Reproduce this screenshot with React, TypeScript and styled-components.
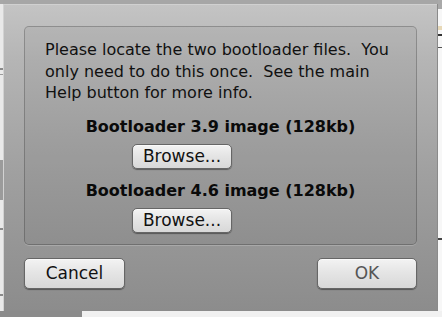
import React from 'react';
import styled, { createGlobalStyle } from 'styled-components';

const Global = createGlobalStyle`
  html, body {
    margin: 0;
    padding: 0;
    width: 442px;
    height: 317px;
    overflow: hidden;
    background: #f3f3f3;
  }
`;

const Screen = styled.div`
  display: grid;
  grid-template-columns: 3px 435px 4px;
  grid-template-rows: 311px 6px;
  width: 442px;
  height: 317px;
  font-family: 'DejaVu Sans', 'Liberation Sans', sans-serif;
`;

const LeftEdge = styled.div`
  background:
    linear-gradient(#a7a7a7 0 4px, transparent 4px),
    linear-gradient(transparent 68px, #8a8a8a 68px 70px, transparent 70px 74px, #9a9a9a 74px 75px, transparent 75px),
    linear-gradient(transparent 160px, #9b9b9b 160px 200px, transparent 200px),
    linear-gradient(transparent 228px, #8a8a8a 228px 230px, transparent 230px 294px, #8a8a8a 294px 296px, transparent 296px),
    #e9e9e9;
`;

const RightEdge = styled.div`
  background:
    linear-gradient(#a9a9a9 0 9px, transparent 9px),
    linear-gradient(transparent 26px, #e8d9b8 26px 30px, transparent 30px),
    linear-gradient(transparent 34px, #333 34px 36px, transparent 36px 47px, #555 47px 48px, transparent 48px),
    linear-gradient(transparent 238px, #444 238px 240px, transparent 240px),
    #f7f7f7;
`;

const BottomStrip = styled.div<{ $split: number }>`
  grid-column: 1 / 4;
  background: linear-gradient(
    90deg,
    #8b8b8b 0 ${p => p.$split}px,
    #f1f1f1 ${p => p.$split}px
  );
`;

const Sheet = styled.div`
  display: flex;
  flex-direction: column;
  box-sizing: border-box;
  padding: 22px 21px 21px;
  border-top: 4px solid #a6a6a6;
  background: linear-gradient(#c4c4c4 0, #b5b5b5 18%, #a0a0a0 55%, #8c8c8c 100%);
  box-shadow: inset 1px 0 0 #d2d2d2, inset -1px 0 0 #8a8a8a, inset 0 1px 0 #d0d0d0;
`;

const Group = styled.div`
  display: flex;
  flex-direction: column;
  height: 219px;
  box-sizing: border-box;
  padding: 12px 20px 0;
  border: 1px solid rgba(0, 0, 0, 0.22);
  border-radius: 5px;
  background: rgba(0, 0, 0, 0.045);
  box-shadow: 0 1px 0 rgba(255, 255, 255, 0.18);
`;

const Message = styled.p`
  margin: 0;
  font-size: 16px;
  line-height: 21.5px;
  color: #111;
  white-space: pre-wrap;
`;

const FileTitle = styled.h2<{ $gap: number }>`
  margin: ${p => p.$gap}px 0 0;
  font-size: 16px;
  font-weight: bold;
  line-height: 20px;
  text-align: center;
  color: #0a0a0a;
`;

const BrowseRow = styled.div`
  display: flex;
  margin-top: 7px;
  padding-left: 87px;
`;

const Footer = styled.div`
  display: flex;
  justify-content: space-between;
  margin-top: 13px;
`;

const Button = styled.button<{ $w: number; $h: number; $dim?: boolean }>`
  width: ${p => p.$w}px;
  height: ${p => p.$h}px;
  padding: 0;
  border: 1px solid #666;
  border-radius: 5px;
  background: linear-gradient(#f3f3f3, #e5e5e5 45%, #d8d8d8);
  box-shadow: 0 1px 1px rgba(0, 0, 0, 0.4), inset 0 1px 0 #fafafa;
  font-family: 'DejaVu Sans', 'Liberation Sans', sans-serif;
  font-size: 17px;
  line-height: 1;
  color: ${p => (p.$dim ? '#555' : '#111')};
`;

export default function App() {
  return (
    <>
      <Global />
      <Screen>
        <LeftEdge />
        <Sheet>
          <Group>
            <Message>
              {'Please locate the two bootloader files.  You\nonly need to do this once.  See the main\nHelp button for more info.'}
            </Message>
            <FileTitle $gap={13}>Bootloader 3.9 image (128kb)</FileTitle>
            <BrowseRow>
              <Button $w={100} $h={25}>Browse...</Button>
            </BrowseRow>
            <FileTitle $gap={12}>Bootloader 4.6 image (128kb)</FileTitle>
            <BrowseRow>
              <Button $w={100} $h={25}>Browse...</Button>
            </BrowseRow>
          </Group>
          <Footer>
            <Button $w={101} $h={31}>Cancel</Button>
            <Button $w={100} $h={31} $dim>OK</Button>
          </Footer>
        </Sheet>
        <RightEdge />
        <BottomStrip $split={82} />
      </Screen>
    </>
  );
}
